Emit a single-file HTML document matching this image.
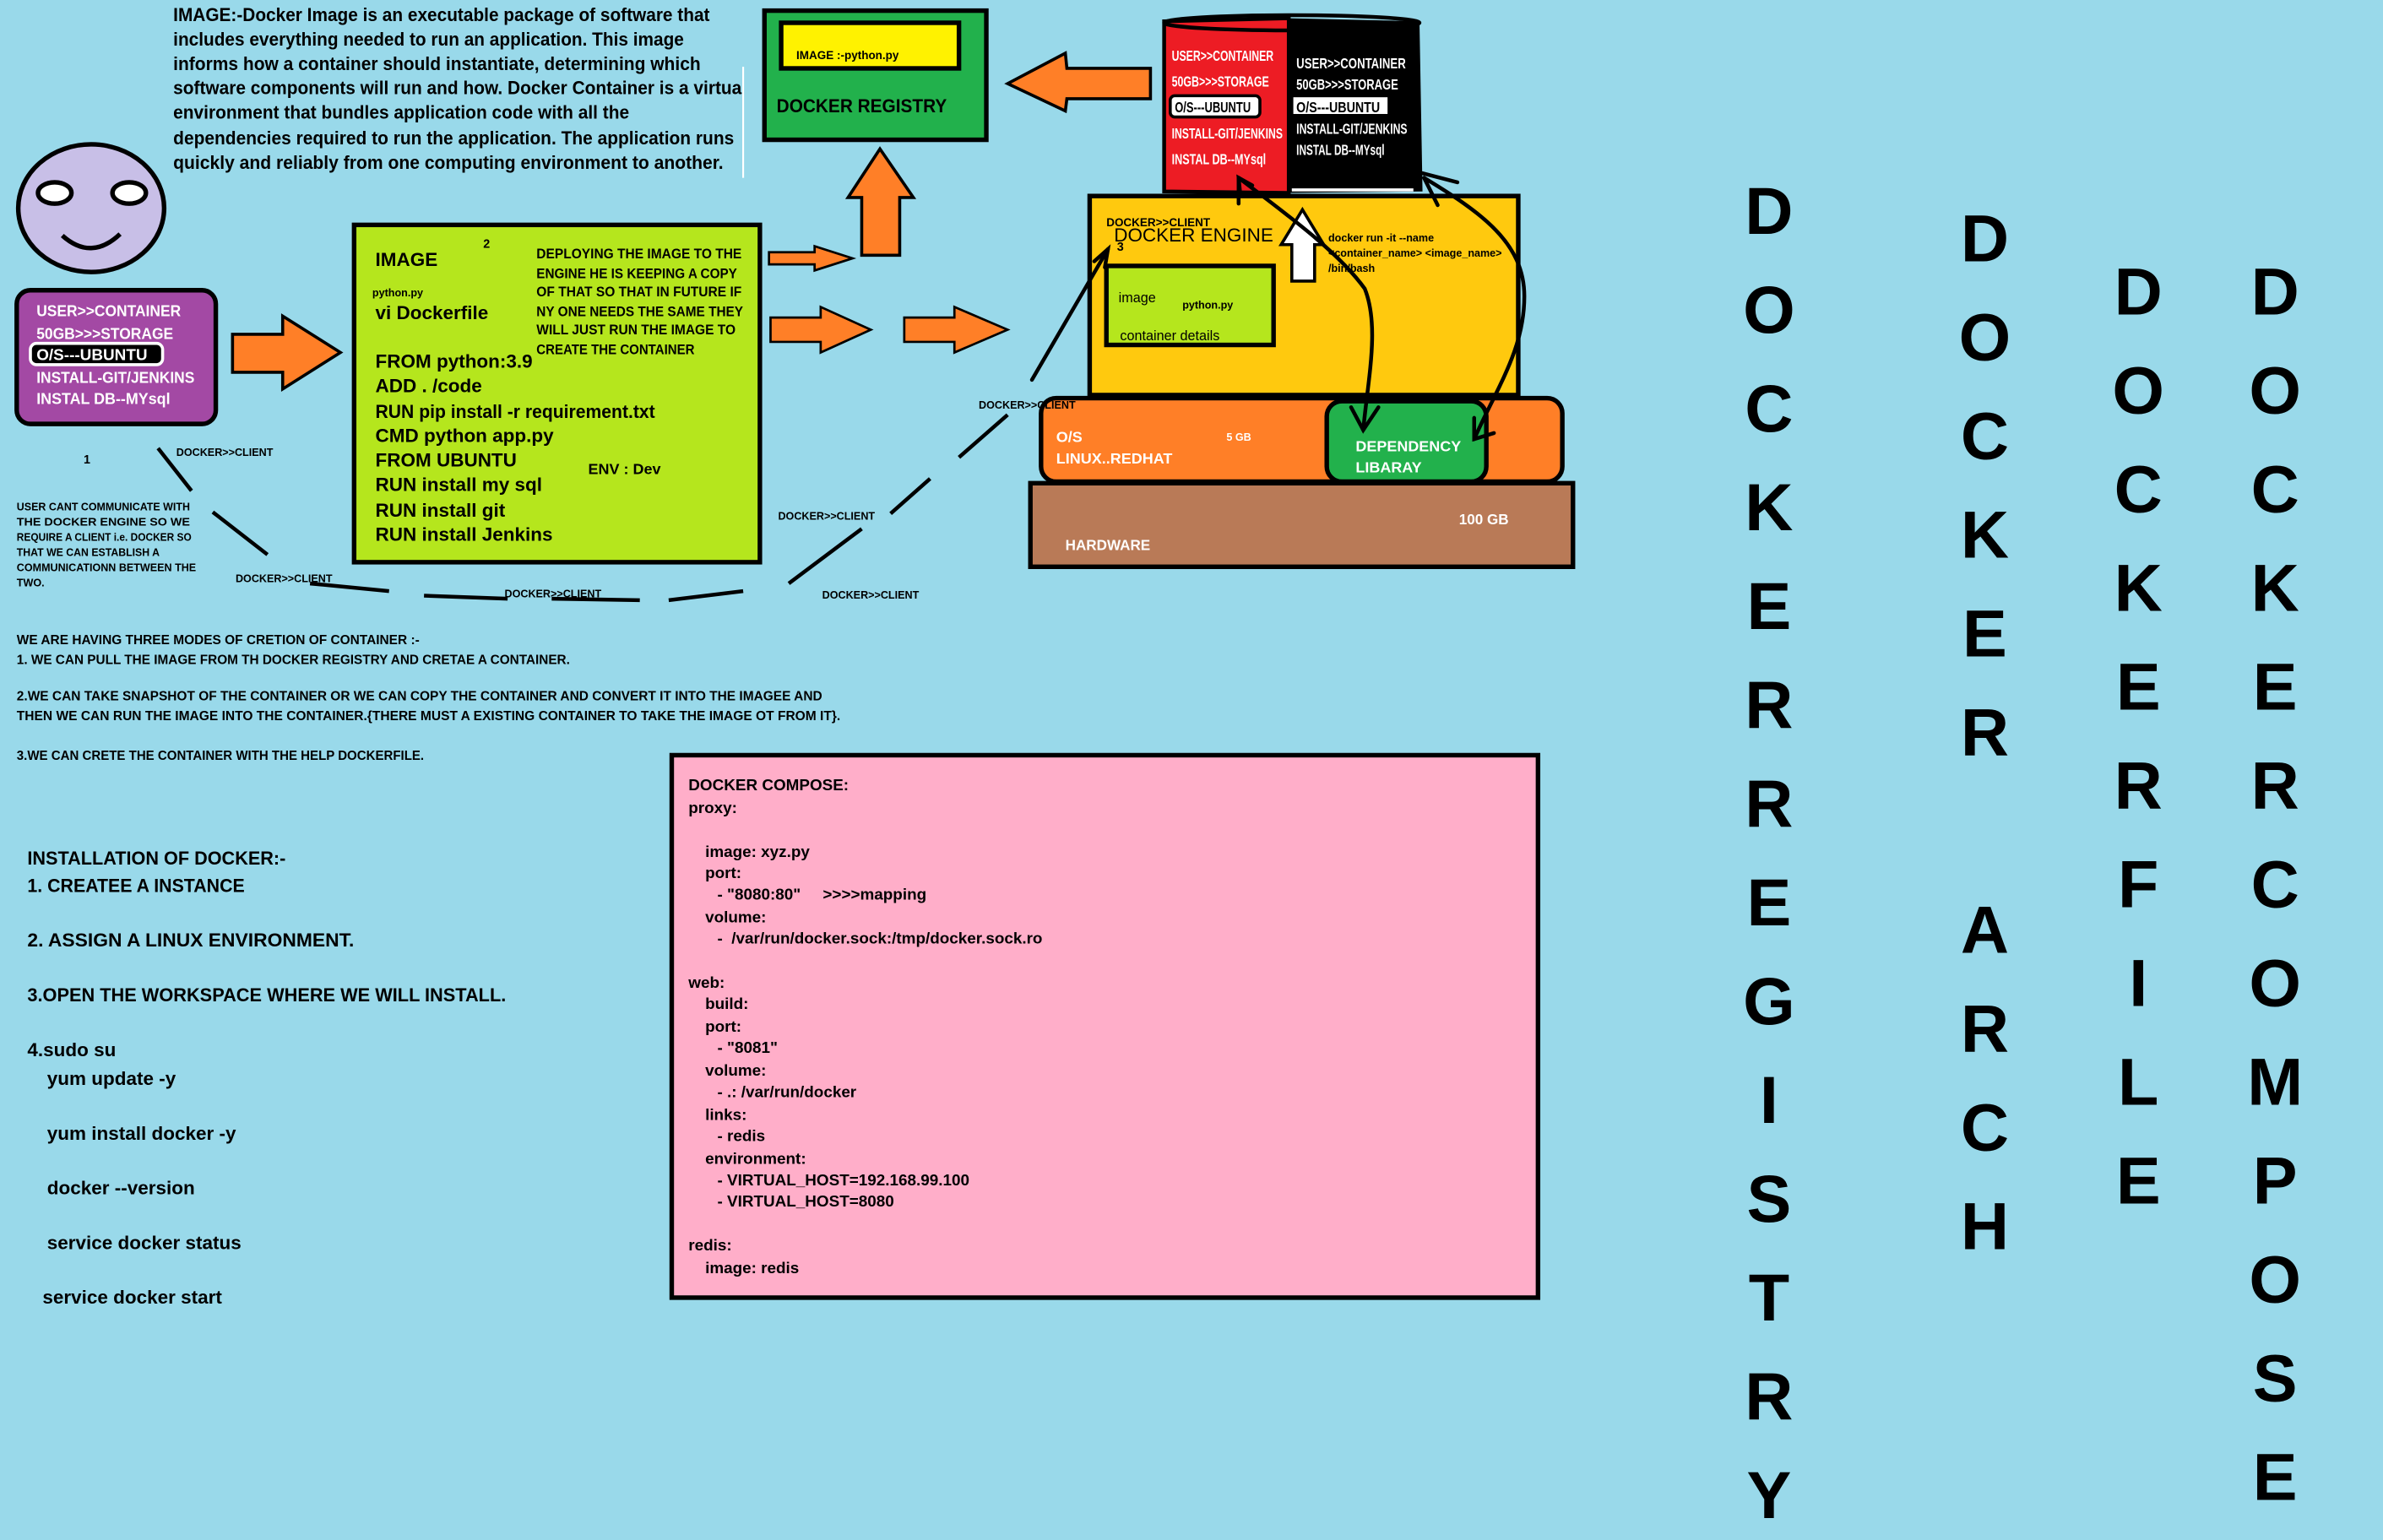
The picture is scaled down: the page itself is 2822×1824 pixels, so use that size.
<!DOCTYPE html>
<html><head><meta charset="utf-8"><style>
html,body{margin:0;padding:0;background:#99d9ea;}
svg{display:block}
text{font-family:"Liberation Sans Narrow","Liberation Sans",sans-serif;font-weight:bold;fill:#000}
.n{font-weight:normal}
.w{fill:#fff}
.big{font-family:"Liberation Sans",sans-serif;font-size:44px;text-anchor:middle}
</style></head><body>
<svg width="2822" height="1824" viewBox="0 0 1568 1013.5" preserveAspectRatio="none" xmlns="http://www.w3.org/2000/svg">
<rect x="0" y="0" width="1568" height="1014" fill="#99d9ea"/>

<!-- top paragraph -->
<g font-size="12.5">
<text x="114" y="14" textLength="353" lengthAdjust="spacingAndGlyphs">IMAGE:-Docker Image is an executable package of software that</text>
<text x="114" y="30" textLength="336" lengthAdjust="spacingAndGlyphs">includes everything needed to run an application. This image</text>
<text x="114" y="46" textLength="347" lengthAdjust="spacingAndGlyphs">informs how a container should instantiate, determining which</text>
<text x="114" y="62" textLength="374" lengthAdjust="spacingAndGlyphs">software components will run and how. Docker Container is a virtua</text>
<text x="114" y="78" textLength="300" lengthAdjust="spacingAndGlyphs">environment that bundles application code with all the</text>
<text x="114" y="95" textLength="369" lengthAdjust="spacingAndGlyphs">dependencies required to run the application. The application runs</text>
<text x="114" y="111" textLength="362" lengthAdjust="spacingAndGlyphs">quickly and reliably from one computing environment to another.</text>
</g>
<line x1="489" y1="44" x2="489" y2="117" stroke="#fff" stroke-width="1.2"/>

<!-- registry -->
<rect x="503" y="7" width="146" height="85" fill="#22b14c" stroke="#000" stroke-width="3"/>
<rect x="514" y="15" width="117" height="30" fill="#fff200" stroke="#000" stroke-width="3"/>
<text x="524" y="39" font-size="7.5">IMAGE :-python.py</text>
<text x="511" y="74" font-size="12.5" textLength="112" lengthAdjust="spacingAndGlyphs">DOCKER REGISTRY</text>

<!-- left arrow -->
<polygon points="757,45 702,45 701,35 663,55 701,73 702,65 757,65" fill="#ff7f27" stroke="#000" stroke-width="2"/>

<!-- face -->
<ellipse cx="60" cy="137" rx="48" ry="42" fill="#c8bfe7" stroke="#000" stroke-width="3"/>
<ellipse cx="36" cy="127" rx="11" ry="7" fill="#fff" stroke="#000" stroke-width="3"/>
<ellipse cx="85" cy="127" rx="11" ry="7" fill="#fff" stroke="#000" stroke-width="3"/>
<path d="M41 155 Q60 172 79 154" fill="none" stroke="#000" stroke-width="3"/>

<!-- purple box -->
<rect x="11" y="191" width="131" height="88" rx="9" fill="#a349a4" stroke="#000" stroke-width="3"/>
<rect x="20" y="226" width="87" height="14" rx="4" fill="#000" stroke="#fff" stroke-width="2"/>
<g font-size="10.5">
<text x="24" y="208" class="w" textLength="95" lengthAdjust="spacingAndGlyphs">USER&gt;&gt;CONTAINER</text>
<text x="24" y="223" class="w" textLength="90" lengthAdjust="spacingAndGlyphs">50GB&gt;&gt;&gt;STORAGE</text>
<text x="24" y="237" class="w" textLength="73" lengthAdjust="spacingAndGlyphs">O/S---UBUNTU</text>
<text x="24" y="252" class="w" textLength="104" lengthAdjust="spacingAndGlyphs">INSTALL-GIT/JENKINS</text>
<text x="24" y="266" class="w" textLength="88" lengthAdjust="spacingAndGlyphs">INSTAL DB--MYsql</text>
</g>

<!-- big right arrow -->
<polygon points="153,220 186,220 186,208 224,232 186,256 186,245 153,245" fill="#ff7f27" stroke="#000" stroke-width="2"/>

<!-- image box -->
<rect x="233" y="148" width="267" height="222" fill="#b5e61d" stroke="#000" stroke-width="3"/>
<text x="247" y="175" font-size="12.5">IMAGE</text>
<text x="318" y="163" font-size="8">2</text>
<text x="245" y="195" font-size="7">python.py</text>
<text x="247" y="210" font-size="12.5">vi Dockerfile</text>
<g font-size="12.5">
<text x="247" y="242">FROM python:3.9</text>
<text x="247" y="258">ADD . /code</text>
<text x="247" y="275" textLength="184" lengthAdjust="spacingAndGlyphs">RUN pip install -r requirement.txt</text>
<text x="247" y="291">CMD python app.py</text>
<text x="247" y="307">FROM UBUNTU</text>
<text x="247" y="323">RUN install my sql</text>
<text x="247" y="340">RUN install git</text>
<text x="247" y="356">RUN install Jenkins</text>
</g>
<text x="387" y="312" font-size="10">ENV : Dev</text>
<g font-size="9">
<text x="353" y="170" textLength="135" lengthAdjust="spacingAndGlyphs">DEPLOYING THE IMAGE TO THE</text>
<text x="353" y="183" textLength="132" lengthAdjust="spacingAndGlyphs">ENGINE HE IS KEEPING A COPY</text>
<text x="353" y="195" textLength="135" lengthAdjust="spacingAndGlyphs">OF THAT SO THAT IN FUTURE IF</text>
<text x="353" y="208" textLength="136" lengthAdjust="spacingAndGlyphs">NY ONE NEEDS THE SAME THEY</text>
<text x="353" y="220" textLength="131" lengthAdjust="spacingAndGlyphs">WILL JUST RUN THE IMAGE TO</text>
<text x="353" y="233" textLength="104" lengthAdjust="spacingAndGlyphs">CREATE THE CONTAINER</text>
</g>

<!-- small arrows -->
<polygon points="506,166 536,166 536,162 561,170 536,178 536,174 506,174" fill="#ff7f27" stroke="#000" stroke-width="1.5"/>
<polygon points="507,209 540,209 540,202 573,217 540,232 540,225 507,225" fill="#ff7f27" stroke="#000" stroke-width="1.5"/>
<polygon points="595,209 628,209 628,202 663,217 628,232 628,225 595,225" fill="#ff7f27" stroke="#000" stroke-width="1.5"/>
<polygon points="567,168 567,130 558,130 579,98 601,130 592,130 592,168" fill="#ff7f27" stroke="#000" stroke-width="2"/>

<!-- dashed client line -->
<g stroke="#000" stroke-width="2.5">
<line x1="104" y1="295" x2="126" y2="323"/>
<line x1="140" y1="337" x2="176" y2="365"/>
<line x1="204" y1="384" x2="256" y2="389"/>
<line x1="279" y1="392" x2="334" y2="394"/>
<line x1="363" y1="394" x2="421" y2="395"/>
<line x1="440" y1="395" x2="489" y2="389"/>
<line x1="519" y1="384" x2="567" y2="348"/>
<line x1="586" y1="338" x2="612" y2="315"/>
<line x1="631" y1="301" x2="663" y2="273"/>
</g>
<g font-size="7">
<text x="116" y="300">DOCKER&gt;&gt;CLIENT</text>
<text x="155" y="383">DOCKER&gt;&gt;CLIENT</text>
<text x="332" y="393">DOCKER&gt;&gt;CLIENT</text>
<text x="512" y="342">DOCKER&gt;&gt;CLIENT</text>
<text x="541" y="394">DOCKER&gt;&gt;CLIENT</text>
</g>
<text x="55" y="305" font-size="8">1</text>
<g font-size="7" class="n">
<text x="11" y="336" textLength="114" lengthAdjust="spacingAndGlyphs">USER CANT COMMUNICATE WITH</text>
<text x="11" y="346" textLength="114" lengthAdjust="spacingAndGlyphs">THE DOCKER ENGINE SO WE</text>
<text x="11" y="356" textLength="115" lengthAdjust="spacingAndGlyphs">REQUIRE A CLIENT i.e. DOCKER SO</text>
<text x="11" y="366" textLength="94" lengthAdjust="spacingAndGlyphs">THAT WE CAN ESTABLISH A</text>
<text x="11" y="376" textLength="118" lengthAdjust="spacingAndGlyphs">COMMUNICATIONN BETWEEN THE</text>
<text x="11" y="386">TWO.</text>
</g>

<!-- hardware stack -->
<rect x="678" y="318" width="357" height="55" fill="#b97a57" stroke="#000" stroke-width="3"/>
<text x="701" y="362" font-size="9.5" class="w">HARDWARE</text>
<text x="960" y="345" font-size="9.5" class="w">100 GB</text>
<rect x="685" y="262" width="343" height="55" rx="10" fill="#ff7f27" stroke="#000" stroke-width="3"/>
<rect x="873" y="264" width="105" height="53" rx="10" fill="#22b14c" stroke="#000" stroke-width="3"/>
<text x="695" y="291" font-size="10" class="w">O/S</text>
<text x="695" y="305" font-size="10" class="w">LINUX..REDHAT</text>
<text x="807" y="290" font-size="7" class="w">5 GB</text>
<text x="892" y="297" font-size="10" class="w">DEPENDENCY</text>
<text x="892" y="311" font-size="10" class="w">LIBARAY</text>

<!-- engine -->
<rect x="717" y="129" width="282" height="131" fill="#ffc90e" stroke="#000" stroke-width="3"/>
<text x="728" y="149" font-size="7.5">DOCKER&gt;&gt;CLIENT</text>
<text x="733" y="159" font-size="12.5" class="n" style="font-family:'Liberation Sans',sans-serif">DOCKER ENGINE</text>
<text x="735" y="165" font-size="8">3</text>
<rect x="728" y="175" width="110" height="52" fill="#b5e61d" stroke="#000" stroke-width="3"/>
<text x="736" y="199" font-size="9" class="n" style="font-family:'Liberation Sans',sans-serif">image</text>
<text x="778" y="203" font-size="7">python.py</text>
<text x="737" y="224" font-size="9" class="n" style="font-family:'Liberation Sans',sans-serif">container details</text>
<g font-size="7" class="n" style="font-family:'Liberation Sans',sans-serif">
<text x="874" y="159">docker run -it --name</text>
<text x="874" y="169">&lt;container_name&gt; &lt;image_name&gt;</text>
<text x="874" y="179">/bin/bash</text>
</g>
<polygon points="857,138 843,161 850,161 850,185 865,185 865,161 871,161" fill="#fff" stroke="#000" stroke-width="2"/>

<!-- cylinder -->
<path d="M766 14 L848 12 L848 127 L766 126 Z" fill="#ed1c24" stroke="#000" stroke-width="2.5"/>
<path d="M848 12 L934 14 L936 126 L848 127 Z" fill="#000"/>
<ellipse cx="850" cy="15" rx="84" ry="5" fill="none" stroke="#000" stroke-width="2.5"/>
<line x1="850" y1="125" x2="930" y2="125" stroke="#fff" stroke-width="2"/>
<rect x="770" y="63" width="59" height="14" rx="3" fill="#fff" stroke="#000" stroke-width="2"/>
<rect x="851" y="64" width="62" height="11" fill="#fff"/>
<g font-size="10">
<text x="771" y="40" class="w" textLength="67" lengthAdjust="spacingAndGlyphs">USER&gt;&gt;CONTAINER</text>
<text x="771" y="57" class="w" textLength="64" lengthAdjust="spacingAndGlyphs">50GB&gt;&gt;&gt;STORAGE</text>
<text x="773" y="74" textLength="50" lengthAdjust="spacingAndGlyphs">O/S---UBUNTU</text>
<text x="771" y="91" class="w" textLength="73" lengthAdjust="spacingAndGlyphs">INSTALL-GIT/JENKINS</text>
<text x="771" y="108" class="w" textLength="62" lengthAdjust="spacingAndGlyphs">INSTAL DB--MYsql</text>
<text x="853" y="45" class="w" textLength="72" lengthAdjust="spacingAndGlyphs">USER&gt;&gt;CONTAINER</text>
<text x="853" y="59" class="w" textLength="67" lengthAdjust="spacingAndGlyphs">50GB&gt;&gt;&gt;STORAGE</text>
<text x="853" y="74" textLength="55" lengthAdjust="spacingAndGlyphs">O/S---UBUNTU</text>
<text x="853" y="88" class="w" textLength="73" lengthAdjust="spacingAndGlyphs">INSTALL-GIT/JENKINS</text>
<text x="853" y="102" class="w" textLength="58" lengthAdjust="spacingAndGlyphs">INSTAL DB--MYsql</text>
</g>

<!-- black arrows -->
<g stroke="#000" stroke-width="2.5" fill="none" stroke-linecap="round">
<path d="M679 250 L729 164"/>
<path d="M720 172 L729 164 L727 176"/>
<path d="M815 134 L815 117"/>
<path d="M815 117 C845 140 880 165 898 190 C908 215 900 250 897 283"/>
<path d="M824 122 L815 117 L816 127"/>
<path d="M889 268 L897 283 L907 268"/>
<path d="M937 117 C975 140 1003 160 1003 195 C1003 230 985 255 970 289"/>
<path d="M936 114 L959 120"/>
<path d="M937 117 L946 135"/>
<path d="M970 275 L970 289 L983 285"/>
</g>
<text x="644" y="269" font-size="7">DOCKER&gt;&gt;CLIENT</text>

<!-- modes -->
<g font-size="8.5" class="n" style="font-family:'Liberation Sans',sans-serif">
<text x="11" y="424" textLength="265" lengthAdjust="spacingAndGlyphs">WE ARE HAVING THREE MODES OF CRETION OF CONTAINER :-</text>
<text x="11" y="437" textLength="364" lengthAdjust="spacingAndGlyphs">1. WE CAN PULL THE IMAGE FROM TH DOCKER REGISTRY AND CRETAE A CONTAINER.</text>
<text x="11" y="461" textLength="530" lengthAdjust="spacingAndGlyphs">2.WE CAN TAKE SNAPSHOT OF THE CONTAINER OR WE CAN COPY THE CONTAINER AND CONVERT IT INTO THE IMAGEE AND</text>
<text x="11" y="474" textLength="542" lengthAdjust="spacingAndGlyphs">THEN WE CAN RUN THE IMAGE INTO THE CONTAINER.{THERE MUST A EXISTING CONTAINER TO TAKE THE IMAGE OT FROM IT}.</text>
<text x="11" y="500" textLength="268" lengthAdjust="spacingAndGlyphs">3.WE CAN CRETE THE CONTAINER WITH THE HELP DOCKERFILE.</text>
</g>

<!-- installation -->
<g font-size="12.5" class="n" style="font-family:'Liberation Sans',sans-serif">
<text x="18" y="569" textLength="170" lengthAdjust="spacingAndGlyphs">INSTALLATION OF DOCKER:-</text>
<text x="18" y="587" textLength="143" lengthAdjust="spacingAndGlyphs">1. CREATEE A INSTANCE</text>
<text x="18" y="623" textLength="215" lengthAdjust="spacingAndGlyphs">2. ASSIGN A LINUX ENVIRONMENT.</text>
<text x="18" y="659" textLength="315" lengthAdjust="spacingAndGlyphs">3.OPEN THE WORKSPACE WHERE WE WILL INSTALL.</text>
<text x="18" y="695">4.sudo su</text>
<text x="31" y="714">yum update -y</text>
<text x="31" y="750">yum install docker -y</text>
<text x="31" y="786">docker --version</text>
<text x="31" y="822">service docker status</text>
<text x="28" y="858">service docker start</text>
</g>

<!-- compose -->
<rect x="442" y="497" width="570" height="357" fill="#ffaec9" stroke="#000" stroke-width="3"/>
<g font-size="10.5">
<text x="453" y="520">DOCKER COMPOSE:</text>
<text x="453" y="535">proxy:</text>
<text x="464" y="564">image: xyz.py</text>
<text x="464" y="578">port:</text>
<text x="472" y="592" xml:space="preserve">- "8080:80"     &gt;&gt;&gt;&gt;mapping</text>
<text x="464" y="607">volume:</text>
<text x="472" y="621" xml:space="preserve">-  /var/run/docker.sock:/tmp/docker.sock.ro</text>
<text x="453" y="650">web:</text>
<text x="464" y="664">build:</text>
<text x="464" y="679">port:</text>
<text x="472" y="693">- "8081"</text>
<text x="464" y="708">volume:</text>
<text x="472" y="722">- .: /var/run/docker</text>
<text x="464" y="737">links:</text>
<text x="472" y="751">- redis</text>
<text x="464" y="766">environment:</text>
<text x="472" y="780">- VIRTUAL_HOST=192.168.99.100</text>
<text x="472" y="794">- VIRTUAL_HOST=8080</text>
<text x="453" y="823">redis:</text>
<text x="464" y="838">image: redis</text>
</g>

<!-- big vertical words -->
<g>
<text class="big" x="1164" y="154">D</text><text class="big" x="1164" y="219">O</text><text class="big" x="1164" y="284">C</text><text class="big" x="1164" y="349">K</text><text class="big" x="1164" y="414">E</text><text class="big" x="1164" y="479">R</text><text class="big" x="1164" y="544">R</text><text class="big" x="1164" y="609">E</text><text class="big" x="1164" y="674">G</text><text class="big" x="1164" y="739">I</text><text class="big" x="1164" y="804">S</text><text class="big" x="1164" y="869">T</text><text class="big" x="1164" y="934">R</text><text class="big" x="1164" y="999">Y</text>
<text class="big" x="1306" y="172">D</text><text class="big" x="1306" y="237">O</text><text class="big" x="1306" y="302">C</text><text class="big" x="1306" y="367">K</text><text class="big" x="1306" y="432">E</text><text class="big" x="1306" y="497">R</text><text class="big" x="1306" y="627">A</text><text class="big" x="1306" y="692">R</text><text class="big" x="1306" y="757">C</text><text class="big" x="1306" y="822">H</text>
<text class="big" x="1407" y="207">D</text><text class="big" x="1407" y="272">O</text><text class="big" x="1407" y="337">C</text><text class="big" x="1407" y="402">K</text><text class="big" x="1407" y="467">E</text><text class="big" x="1407" y="532">R</text><text class="big" x="1407" y="597">F</text><text class="big" x="1407" y="662">I</text><text class="big" x="1407" y="727">L</text><text class="big" x="1407" y="792">E</text>
<text class="big" x="1497" y="207">D</text><text class="big" x="1497" y="272">O</text><text class="big" x="1497" y="337">C</text><text class="big" x="1497" y="402">K</text><text class="big" x="1497" y="467">E</text><text class="big" x="1497" y="532">R</text><text class="big" x="1497" y="597">C</text><text class="big" x="1497" y="662">O</text><text class="big" x="1497" y="727">M</text><text class="big" x="1497" y="792">P</text><text class="big" x="1497" y="857">O</text><text class="big" x="1497" y="922">S</text><text class="big" x="1497" y="987">E</text>
</g>
</svg>
</body></html>
